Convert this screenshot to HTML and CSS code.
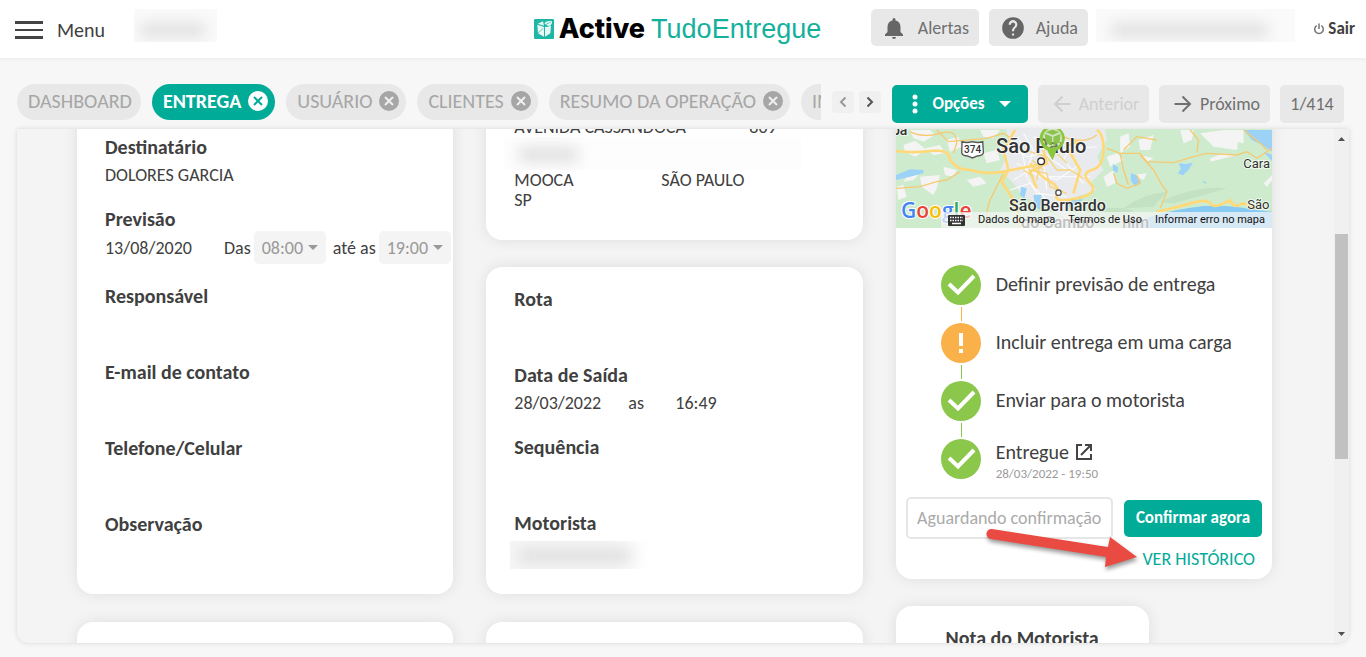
FILE: index.html
```html
<!DOCTYPE html>
<html lang="pt-BR">
<head>
<meta charset="utf-8">
<meta name="viewport" content="width=device-width, initial-scale=1">
<title>Active TudoEntregue</title>
<link rel="stylesheet" href="styles.css">
</head>
<body>
<header class="header">
  <div class="header-side header-start">
    <button class="menu-btn" type="button"><span class="burger"></span>Menu</button>
    <span class="masked masked-company"></span>
  </div>
  <div class="brand">
    <svg class="brand-icon" viewBox="0 0 60 60" aria-hidden="true">
      <rect width="60" height="60" rx="3" fill="#1fb6a4"/>
      <path d="M10 17 30 24V53L12 43Z M33 24 51 20 49 43 33 53Z M11 14 27 7 30 20Z M31 12Q40 4 54 7Q56 17 45 21Q36 21 31 12Z" fill="#e9f8f6"/>
      <path d="M31 24Q36 12 50 10M36 22l8 1M12 42 28 28" stroke="#1fb6a4" stroke-width="2" fill="none"/>
    </svg>
    <span class="brand-strong">Active</span><span class="brand-light">TudoEntregue</span>
  </div>
  <div class="header-side header-end">
    <button class="btn btn-alerts" type="button">
      <svg width="24" height="24" viewBox="0 0 24 24" fill="#666" aria-hidden="true"><path d="M12 23a2 2 0 0 0 2-2h-4a2 2 0 0 0 2 2zm6.500-7v-5c0-3.300-1.700-5.900-5-6.600V3.500a1.500 1.500 0 0 0-3 0v.9c-3.300.7-5 3.300-5 6.600v5L3 18.500V20h18v-1.500z"/></svg>
      Alertas</button>
    <button class="btn btn-help" type="button">
      <svg width="26" height="26" viewBox="0 0 24 24" fill="#666" aria-hidden="true"><path d="M12 2a10 10 0 1 0 0 20 10 10 0 0 0 0-20zm1 17h-2v-2h2zm2.070-7.750-.9.920C13.450 12.900 13 13.500 13 15h-2v-.5c0-1.100.45-2.100 1.170-2.830l1.240-1.260A2 2 0 1 0 10 9H8a4 4 0 1 1 7.070 2.250z"/></svg>
      Ajuda</button>
    <span class="masked masked-user"></span>
    <button class="logout" type="button">
      <svg width="12" height="12" viewBox="0 0 12 12" fill="none" stroke="#777" stroke-width="1.500" aria-hidden="true"><path d="M3.700 2.600a4.300 4.300 0 1 0 4.600 0M6 .5v5.500"/></svg>
      Sair</button>
  </div>
</header>

<nav class="toolbar">
  <div class="tabs">
    <button class="tab" type="button">DASHBOARD</button>
    <button class="tab tab-active" type="button">ENTREGA <svg class="tab-x" viewBox="0 0 20 20"><circle cx="10" cy="10" r="10"/><path d="m6 6 8 8m0-8-8 8"/></svg></button>
    <button class="tab" type="button">USUÁRIO <svg class="tab-x" viewBox="0 0 20 20"><circle cx="10" cy="10" r="10"/><path d="m6 6 8 8m0-8-8 8"/></svg></button>
    <button class="tab" type="button">CLIENTES <svg class="tab-x" viewBox="0 0 20 20"><circle cx="10" cy="10" r="10"/><path d="m6 6 8 8m0-8-8 8"/></svg></button>
    <button class="tab" type="button">RESUMO DA OPERAÇÃO <svg class="tab-x" viewBox="0 0 20 20"><circle cx="10" cy="10" r="10"/><path d="m6 6 8 8m0-8-8 8"/></svg></button>
    <button class="tab" type="button">IMPORTAR</button>
  </div>
  <div class="tab-arrows">
    <button class="tab-arrow" type="button" aria-label="Abas anteriores"><svg width="8" height="12" viewBox="0 0 8 12" fill="none" stroke="#999" stroke-width="2"><path d="M6.500 1.500 2 6l4.500 4.500"/></svg></button>
    <button class="tab-arrow" type="button" aria-label="Próximas abas"><svg width="8" height="12" viewBox="0 0 8 12" fill="none" stroke="#555" stroke-width="2"><path d="M1.500 1.500 6 6l-4.500 4.500"/></svg></button>
  </div>
  <div class="record-actions">
    <button class="btn btn-options" type="button">
      <svg width="6" height="20" viewBox="0 0 6 20" fill="#fff"><circle cx="3" cy="3" r="2.500"/><circle cx="3" cy="10" r="2.500"/><circle cx="3" cy="17" r="2.500"/></svg>
      Opções
      <svg width="12" height="6" viewBox="0 0 12 6" fill="#fff"><path d="M0 0h12L6 6z"/></svg></button>
    <button class="btn btn-step" type="button" disabled>
      <svg width="18" height="18" viewBox="0 0 18 18" fill="none" stroke="currentColor" stroke-width="2"><path d="M17.500 9H2M9.500 1.500 2 9l7.500 7.500"/></svg>
      Anterior</button>
    <button class="btn btn-step" type="button">
      <svg width="18" height="18" viewBox="0 0 18 18" fill="none" stroke="currentColor" stroke-width="2"><path d="M.5 9H16M8.500 1.500 16 9l-7.500 7.500"/></svg>
      Próximo</button>
    <span class="btn btn-count">1/414</span>
  </div>
</nav>

<main class="panel">
  <div class="viewport">
    <div class="columns">
      <section class="column">
        <article class="card card-cut card-recipient">
          <div class="field"><h2>Destinatário</h2><p>DOLORES GARCIA</p></div>
          <div class="field field-time">
            <h2>Previsão</h2>
            <div class="time-row">
              <p class="date">13/08/2020</p>
              <label for="from">Das</label>
              <span class="select"><select id="from" disabled><option>08:00</option></select></span>
              <label for="to" class="until">até as</label>
              <span class="select"><select id="to" disabled><option>19:00</option></select></span>
            </div>
          </div>
          <div class="field field-tall"><h2>Responsável</h2><p></p></div>
          <div class="field field-tall"><h2>E-mail de contato</h2><p></p></div>
          <div class="field field-tall"><h2>Telefone/Celular</h2><p></p></div>
          <div class="field"><h2>Observação</h2><p></p></div>
        </article>
        <article class="card card-next"></article>
      </section>

      <section class="column">
        <article class="card card-cut card-address">
          <div class="address-row street"><p>AVENIDA CASSANDOCA</p><p>809</p></div>
          <div class="masked masked-address"></div>
          <div class="address-row"><p>MOOCA</p><p>SÃO PAULO</p></div>
          <p>SP</p>
        </article>
        <article class="card card-route">
          <div class="field field-tall"><h2>Rota</h2><p></p></div>
          <div class="field"><h2>Data de Saída</h2><div class="departure"><p>28/03/2022</p><p>as</p><p>16:49</p></div></div>
          <div class="field field-tall"><h2>Sequência</h2><p></p></div>
          <div class="field"><h2>Motorista</h2><div class="masked masked-driver"></div></div>
        </article>
        <article class="card card-next"></article>
      </section>

      <section class="column">
        <article class="card card-cut card-status">
          <div class="map">
            <svg class="map-art" viewBox="0 0 376 114" preserveAspectRatio="xMidYMid slice" role="img" aria-label="Mapa de São Paulo">
              <rect width="376" height="114" fill="#ceebce"/>
              <g transform="translate(-6 6) scale(.3333)">
                <path fill="#e9eaee" d="M340 0H640L650 60 620 110 640 150 600 190 620 210 560 230 530 260 540 300 470 260 400 230 370 190 330 150 350 110 310 90 360 70Z"/>
                <path fill="#f4f4f4" d="M60 30H120L135 45 100 65 70 55ZM40 75 75 62 110 90 75 110 45 95ZM105 85 150 75 165 100 130 105ZM170 60 205 50 215 80 180 95ZM270 30H330L310 55 280 50ZM280 100 320 90 330 120 290 130ZM90 170 150 165 140 205 130 225 95 200ZM60 155 85 165 70 180 40 185ZM160 140 200 150 190 170 165 165ZM20 200 40 195 50 230 25 240ZM230 180 270 170 290 190 250 200ZM690 50 715 40 720 80 690 100ZM745 60 790 45 780 90 750 90ZM870 30H910L905 60 880 70ZM930 40 1000 30 1045 50 1040 90 970 80ZM750 105 790 115 770 125ZM960 115 1000 100 1040 105 960 125ZM1000 30H1060V70L1010 60ZM650 110 680 100 700 120 660 140ZM640 170 670 150 675 190 650 200ZM730 165 770 160 760 180ZM1120 190 1146 165V180L1130 200Z"/>
                <path fill="#c2e2c3" d="M810 245Q920 195 1010 205 930 230 850 250ZM700 265Q760 220 830 215L790 260ZM560 290Q650 250 730 270L690 300Z"/>
                <path fill="#9cd2f5" d="M18 165 60 148 100 150 100 160 60 170 18 180ZM1060 30H1146V95L1115 75 1085 60ZM866 130 888 132 908 128 895 150 878 166 862 160 872 148ZM722 160 738 165 752 185 735 200 722 182ZM668 132 684 142 682 158 668 152ZM393 200 410 205 403 235 390 225ZM430 225 455 225 450 270 435 260ZM1120 95 1146 105V125ZM530 240 580 238 540 265ZM935 182l14 5-5 4Z"/>
                <path fill="#86c9f3" d="M780 290Q850 268 940 258 1030 255 1080 268L1146 275V324H690Z"/>
                <g fill="none" stroke="#fff" stroke-width="3" opacity=".9"><path d="M350 70 410 110 460 100 530 150M370 180 420 150 500 180 560 140M390 60 410 170 440 220 530 230M550 60 520 120 580 190M460 130 470 210M380 130 450 170 600 170M430 50 500 90 620 80M400 40 430 90 415 140M360 210 420 190 470 240M510 30 500 80"/></g>
                <g fill="none" stroke="#f5ca70" stroke-width="4"><path d="M18 205 90 200 140 185 170 180 210 155M140 30 175 65 290 55 340 40 370 60M60 35Q100 55 150 40T200 70L190 100M340 160 300 240Q285 280 290 324M520 50Q580 75 620 45M650 85 690 100 750 100 770 125 850 128 910 110 950 100 1040 105 1070 95 1100 115 1146 85M700 90 740 50 800 60M900 30 925 60 920 98M670 160 680 190 710 205 750 190 740 165M750 105 790 150 815 195 830 215 810 265M1060 30 1110 70 1130 90M690 100 700 150 715 195"/></g>
                <g fill="none" stroke="#ffd978" stroke-width="8"><path d="M18 93Q60 100 120 93T180 120Q200 150 240 150 290 165 340 155T440 135M375 30 340 90 355 150 335 185 370 240 390 324M420 130Q450 170 480 185T500 225 560 235 600 190 605 150 640 90 620 30M570 60 530 80 570 150 550 220M460 90 470 130 420 155 440 205M800 275Q850 265 900 250T960 250 1000 250 1020 245L1035 258 1060 250 1100 265"/></g>
                <g fill="none" stroke="#f7d47c" stroke-width="4"><path d="M400 90 470 110 500 150 540 150 580 175M415 150 470 160 480 200 530 220M450 130 440 180M400 150 430 170M490 90 530 130M425 120 460 150"/></g>
                <circle cx="453" cy="124" r="10" fill="#fff" stroke="#333" stroke-width="4"/>
                <circle cx="505" cy="218" r="8" fill="#fff" stroke="#555" stroke-width="4"/>
                <path d="M216 65Q230 70 247 65 264 70 278 65L280 98Q278 107 262 108L247 114 232 108Q216 107 215 98Z" fill="#fff" stroke="#555" stroke-width="4"/>
              </g>
              <g class="map-labels">
                <text x="-4" y="21">pa</text>
                <text class="road" x="68" y="39">374</text>
                <text class="city" x="100" y="39">São Paulo</text>
                <text class="town" x="113" y="97">São Bernardo</text>
                <text class="town" x="125" y="114">do Campo</text>
                <text class="small" x="347" y="54">Cara</text>
                <text class="small" x="351" y="95">São</text>
                <text class="town" x="226" y="114">him</text>
              </g>
              <g transform="translate(-6 6) scale(.3333)">
                <path fill="#8bc63f" fill-rule="evenodd" d="M486 18A37 37 0 0 0 451 68Q460 87 471 91L487 121 500 91Q520 84 524 58A38 38 0 0 0 486 18ZM487 25A29 29 0 1 1 487 83 29 29 0 1 1 487 25Z"/>
                <circle cx="487" cy="54" r="29" fill="#b5dc86" fill-opacity=".45"/>
                <path d="M464 41 486 50V78L466 67ZM490 50 511 41 509 67 490 78ZM466 36 487 29 508 36 488 45Z" fill="#7fbd3a" fill-opacity=".85"/>
              </g>
              <text class="google" x="5" y="104"><tspan fill="#4285f4">G</tspan><tspan fill="#ea4335">o</tspan><tspan fill="#fbbc05">o</tspan><tspan fill="#4285f4">g</tspan><tspan fill="#34a853">l</tspan><tspan fill="#ea4335">e</tspan></text>
            </svg>
            <div class="map-credits">
              <svg width="17" height="11" viewBox="0 0 17 11"><rect width="17" height="11" rx="1" fill="#333"/><path d="M2 2.500h13M2 5.500h13" stroke="#fff" stroke-width="1.500" stroke-dasharray="1.500 1"/><path d="M4 8.500h9" stroke="#fff" stroke-width="1.500"/></svg>
              <span>Dados do mapa</span><a href="#">Termos de Uso</a><a href="#">Informar erro no mapa</a>
            </div>
          </div>
          <ol class="steps">
            <li class="step"><svg class="step-icon" viewBox="0 0 40 40"><circle cx="20" cy="20" r="20" fill="#8bc74a"/><path d="m8 19 9 8.500L33 11" fill="none" stroke="#fff" stroke-width="4"/></svg><span>Definir previsão de entrega</span></li>
            <li class="step after-warn"><svg class="step-icon" viewBox="0 0 40 40"><circle cx="20" cy="20" r="20" fill="#fab14a"/><path d="M18 10h4v13h-4zM18 26h4v4h-4z" fill="#fff"/></svg><span>Incluir entrega em uma carga</span></li>
            <li class="step after-ok"><svg class="step-icon" viewBox="0 0 40 40"><circle cx="20" cy="20" r="20" fill="#8bc74a"/><path d="m8 19 9 8.500L33 11" fill="none" stroke="#fff" stroke-width="4"/></svg><span>Enviar para o motorista</span></li>
            <li class="step after-ok"><svg class="step-icon" viewBox="0 0 40 40"><circle cx="20" cy="20" r="20" fill="#8bc74a"/><path d="m8 19 9 8.500L33 11" fill="none" stroke="#fff" stroke-width="4"/></svg>
              <div class="step-done"><a href="#">Entregue <svg width="16" height="16" viewBox="0 0 16 16" fill="none" stroke="#444" stroke-width="2"><path d="M6 1H1v14h14v-5M9 1h6v6M15 1 5 11"/></svg></a><time>28/03/2022 - 19:50</time></div></li>
          </ol>
          <div class="confirm">
            <div class="confirm-row">
              <button class="btn-waiting" type="button" disabled>Aguardando confirmação</button>
              <button class="btn btn-confirm" type="button">Confirmar agora</button>
            </div>
            <a class="history" href="#">VER HISTÓRICO</a>
            <svg class="pointer" viewBox="0 0 160 50" aria-hidden="true"><path d="M10 7 126 25 128 15 155 35 123 45 124 35 9 17A5 5 0 0 1 10 7Z" fill="#e94b43"/></svg>
          </div>
        </article>
        <article class="card card-note"><h2>Nota do Motorista</h2></article>
      </section>
    </div>
  </div>
  <div class="scrollbar" aria-hidden="true">
    <svg width="7" height="4" viewBox="0 0 7 4" fill="#505050"><path d="M0 4h7L3.500 0z"/></svg>
    <div class="track"><div class="thumb"></div></div>
    <svg width="7" height="4" viewBox="0 0 7 4" fill="#505050"><path d="M0 0h7L3.500 4z"/></svg>
  </div>
</main>
</body>
</html>
```

FILE: styles.css
```css
* { box-sizing: border-box; }

body {
  margin: 0;
  height: 100vh;
  display: flex;
  flex-direction: column;
  overflow: hidden;
  background: #f7f7f7;
  color: #404040;
  font: 18px/20px Carlito, Lato, sans-serif;
}

h2, p, ol { margin: 0; padding: 0; }
h2 { font-size: 20px; line-height: 24px; font-weight: 700; }
button, select { font: inherit; color: inherit; border: 0; margin: 0; padding: 0; background: none; }
a { color: inherit; text-decoration: none; }
svg { display: block; flex: none; }

/* header */
.header {
  flex: none;
  height: 58px;
  display: grid;
  grid-template-columns: 1fr auto 1fr;
  align-items: center;
  padding-right: 11px;
  background: #fff;
  box-shadow: 0 1px 3px #e8e8e8;
}
.header-side { display: flex; align-items: center; }
.header-start { padding-left: 15px; }
.header-end { justify-content: flex-end; padding-bottom: 3px; }
.menu-btn { display: flex; align-items: center; gap: 14px; font-size: 20px; line-height: 24px; padding-top: 2px; }
.burger {
  width: 28px;
  height: 18px;
  border-top: 3px solid #444;
  border-bottom: 3px solid #444;
  background: linear-gradient(#444, #444) center / 100% 2px no-repeat;
}
.masked { position: relative; display: block; overflow: hidden; background: #fafafa; }
.masked::after {
  content: "";
  position: absolute;
  inset: 45% 14% 15% 8%;
  background: #e0e0e0;
  filter: blur(7px);
}
.masked-company { width: 83px; height: 33px; margin: 0 0 8px 29px; }
.masked-user { width: 199px; height: 33px; margin: 0 18px 5px 8px; }

.brand { display: flex; align-items: center; line-height: 30px; }
.brand-icon { width: 20px; height: 20px; margin-right: 5px; }
.brand-strong { font: 800 27px/30px Inter, sans-serif; color: #000; margin-right: 6px; }
.brand-light { font: 27px/30px "Liberation Sans", Arial, sans-serif; color: #13b09c; }

.btn {
  display: flex;
  align-items: center;
  justify-content: center;
  border-radius: 5px;
  background: #e8e8e8;
  color: #707070;
  white-space: nowrap;
}
.btn-alerts { height: 37px; min-width: 108px; gap: 12px; margin-right: 10px; }
.btn-help { height: 37px; min-width: 99px; gap: 10px; }
.logout { display: flex; align-items: center; gap: 3px; font-weight: 700; font-size: 17px; padding-top: 3px; }

/* tabs and record navigation */
.toolbar { flex: none; height: 71px; display: flex; align-items: center; padding: 16px 22px 0 17px; }
.tabs { flex: 1; min-width: 0; display: flex; gap: 11px; overflow: hidden; }
.tab {
  flex: none;
  height: 36px;
  display: flex;
  align-items: center;
  gap: 7px;
  padding: 0 7px 2px 11px;
  border-radius: 18px;
  background: #e8e8e8;
  color: #a6a6a6;
  font-size: 20px;
  white-space: nowrap;
}
.tab:first-child { padding-right: 9px; }
.tab-x { width: 20px; height: 20px; fill: #a6a6a6; stroke-width: 2; }
.tab-x path { stroke: #f0f0f0; }
.tab-active { background: #00ab98; color: #fff; font-weight: 700; }
.tab-active .tab-x { fill: #fff; }
.tab-active .tab-x path { stroke: #00ab98; }
.tab-arrows { display: flex; gap: 5px; margin: 0 11px; }
.tab-arrow { width: 22px; height: 22px; display: grid; place-items: center; border-radius: 4px; background: #f0f0f0; }
.record-actions { display: flex; gap: 10px; padding-top: 4px; }
.record-actions .btn { height: 38px; }
.btn-options { min-width: 136px; gap: 14px; padding-left: 3px; background: #00ab98; color: #fff; font-weight: 700; font-size: 17px; }
.btn-step { min-width: 111px; gap: 8px; padding-left: 5px; }
.btn-step:disabled { color: #cfcfcf; }
.btn-count { min-width: 64px; }

/* scrolled panel */
.panel {
  flex: 1;
  min-height: 0;
  display: flex;
  margin: 0 17px 14px;
  border-radius: 0 0 12px 12px;
  background: #f4f4f4;
  box-shadow: 0 0 5px #d6d6d6;
  overflow: hidden;
}
.viewport { flex: 1; min-width: 0; overflow: hidden; }
.columns {
  display: grid;
  grid-template-columns: repeat(3, minmax(0, 1fr));
  gap: 33px;
  margin-top: -15px;
  padding: 0 62px 0 60px;
}
.column { display: flex; flex-direction: column; gap: 27px; }
.card { border-radius: 16px; background: #fff; box-shadow: 0 0 14px #dedede; padding: 20px 28px 33px; }
.card-cut { border-radius: 0 0 16px 16px; }
.card-recipient { padding: 21px 0 32px 28px; }
.card-next { height: 180px; margin-top: 1px; }

.field { margin-bottom: 22px; }
.field:last-child { margin-bottom: 0; }
.field h2 { margin-bottom: 6px; }
.field p { min-height: 20px; }
.field-tall { margin-bottom: 26px; }
.field-time { margin-bottom: 20px; }
.field-time h2 { margin-bottom: 0; }
.time-row { display: flex; align-items: center; height: 33px; white-space: nowrap; }
.date { flex: none; width: 119px; }
.until { margin-left: 7px; }
.select {
  position: relative;
  flex: none;
  width: 72px;
  height: 33px;
  margin-left: 3px;
  border-radius: 5px;
  background: #f4f4f4;
}
.select::after {
  content: "";
  position: absolute;
  right: 8px;
  top: 14px;
  border: 5px solid transparent;
  border-top-color: #999;
  border-bottom: 0;
  pointer-events: none;
}
.select select { appearance: none; width: 100%; height: 100%; padding-left: 8px; color: #999; font-size: 18px; opacity: 1; }

.card-address { padding: 3px 28px 30px; }
.address-row { display: grid; grid-template-columns: 147px 1fr; }
.street { grid-template-columns: 235px 1fr; }
.masked-address { height: 33px; margin: 0 34px 0 -10px; background: #fdfdfd; }
.masked-address::after { inset: 30% 75% 25% 5%; }
.departure { display: grid; grid-template-columns: 114px 47px 1fr; }
.masked-driver { width: 140px; height: 28px; margin: 0 0 -8px -4px; background: linear-gradient(90deg, #f6f6f6 70%, #fff); }
.masked-driver::after { inset: 25% 14% 20% 6%; }

/* map */
.card-status { padding: 0; }
.map { position: relative; height: 114px; overflow: hidden; }
.map-art { width: 100%; height: 114px; }
.map-labels text {
  font: 500 14px Roboto, sans-serif;
  fill: #333;
  stroke: #fff;
  stroke-width: 2px;
  stroke-opacity: .7;
  paint-order: stroke;
}
.map-labels .city { font-size: 20px; }
.map-labels .town { font-size: 16px; }
.map-labels .small { font-size: 13px; font-weight: 400; }
.map-labels .road { font-size: 10px; }
.google { font: 600 21px "Open Sans", sans-serif; stroke: #fff; stroke-width: 2px; paint-order: stroke; }
.map-credits {
  position: absolute;
  right: 0;
  bottom: 0;
  height: 16px;
  display: flex;
  align-items: center;
  gap: 13px;
  padding: 0 7px;
  background: rgba(245, 245, 245, .72);
  color: #111;
  font: 11px/16px Roboto, sans-serif;
  white-space: nowrap;
}

/* delivery steps */
.steps { list-style: none; padding: 37px 20px 0 45px; }
.step { position: relative; height: 40px; display: flex; align-items: center; gap: 15px; font-size: 20px; line-height: 24px; margin-bottom: 18px; }
.step:last-child { margin-bottom: 0; }
.step span { padding-bottom: 2px; }
.step-icon { width: 40px; height: 40px; }
.after-warn::before, .after-ok::before {
  content: "";
  position: absolute;
  left: 20px;
  top: -16px;
  width: 1px;
  height: 14px;
  background: #8bc74a;
}
.after-warn::before { background: #fab14a; }
.step-done { display: grid; gap: 2px; padding-top: 4px; }
.step-done a { display: flex; align-items: center; gap: 7px; }
.step-done time { color: #999; font-size: 13px; line-height: 16px; }

.confirm { position: relative; padding: 18px 10px 10px; }
.confirm-row { display: flex; align-items: center; justify-content: space-between; }
.btn-waiting { width: 207px; height: 42px; border: 2px solid #e6e6e6; border-radius: 5px; color: #aaa; white-space: nowrap; }
.btn-confirm { width: 138px; height: 37px; background: #00ab98; color: #fff; font-weight: 700; font-size: 17px; }
.history { display: block; width: max-content; margin: 10px 7px 0 auto; color: #00ab98; }
.pointer {
  position: absolute;
  left: 86px;
  top: 43px;
  width: 160px;
  height: 50px;
  filter: drop-shadow(1px 3px 2px rgba(0, 0, 0, .4));
}
.card-note { width: 253px; height: 180px; text-align: center; padding: 20px 10px; }

.scrollbar {
  flex: none;
  width: 15px;
  display: flex;
  flex-direction: column;
  align-items: center;
  padding: 8px 0 7px;
  background: #f0f0f0;
}
.track { flex: 1; width: 13px; padding-top: 93px; }
.thumb { height: 225px; background: #c1c1c1; }
```
